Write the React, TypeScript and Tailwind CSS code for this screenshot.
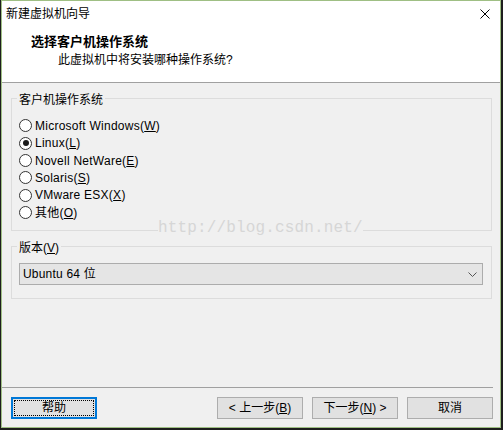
import React from "react";

const font = "font-['Liberation_Sans','Noto_Sans_CJK_SC',sans-serif]";

interface RadioRowProps {
  label: string;
  mnemonic: string;
  checked?: boolean;
}

const RadioRow = ({ label, mnemonic, checked }: RadioRowProps) => {
  return (
    <div className="flex items-center gap-[3px] h-[17.33px]">
      <span className="w-[13px] h-[13px] rounded-full border border-[#333333] bg-white flex items-center justify-center flex-shrink-0">
        {checked && <span className="w-[6px] h-[6px] rounded-full bg-[#1a1a1a]" />}
      </span>
      <span className="text-[12px] leading-[16px] tracking-[0.25px] text-black whitespace-nowrap">
        {label}(<u>{mnemonic}</u>)
      </span>
    </div>
  );
};

const Button = ({ children, focused }: { children: React.ReactNode; focused?: boolean }) => {
  return (
    <div
      className={`w-[86px] h-[22px] bg-[#e1e1e1] flex items-center justify-center text-[12px] leading-[16px] text-black ${
        focused ? "border-2 border-[#0078d7] p-[1px]" : "border border-[#adadad]"
      }`}
    >
      {focused ? (
        <div className="w-full h-full border border-dotted border-black flex items-center justify-center">
          {children}
        </div>
      ) : (
        children
      )}
    </div>
  );
};

const systems = [
  { label: "Microsoft Windows", mnemonic: "W" },
  { label: "Linux", mnemonic: "L", checked: true },
  { label: "Novell NetWare", mnemonic: "E" },
  { label: "Solaris", mnemonic: "S" },
  { label: "VMware ESX", mnemonic: "X" },
  { label: "其他", mnemonic: "O" },
];

export default function App() {
  return (
    <div className={`relative w-[503px] h-[430px] bg-[#1e1e1e] pl-[1px] pr-[2px] pb-[2px] ${font}`}>
      <div className="w-full h-full border border-[#9fbf84] bg-[#f0f0f0] flex flex-col">
        {/* title + header */}
        <div className="bg-white h-[81px] flex flex-col">
          <div className="h-[26px] flex items-center justify-between pl-[4px] pr-[10px]">
            <span className="text-[12px] leading-[16px] text-black">新建虚拟机向导</span>
            <svg width="10" height="10" viewBox="0 0 10 10">
              <path d="M0.5 0.5 L9.5 9.5 M9.5 0.5 L0.5 9.5" stroke="#000" strokeWidth="1" />
            </svg>
          </div>
          <h1 className="mt-[7px] pl-[29px] text-[13px] leading-[16px] font-bold text-black">
            选择客户机操作系统
          </h1>
          <p className="mt-[2px] pl-[56px] text-[12px] leading-[16px] text-black">
            此虚拟机中将安装哪种操作系统?
          </p>
        </div>
        <div className="h-[1px] bg-[#a0a0a0]" />

        {/* body */}
        <div className="flex-1 flex flex-col pl-[9px] pr-[8px]">
          <fieldset className="mt-[5px] h-[143px] border border-[#dcdcdc]">
            <legend className="ml-[5px] px-[2px] pt-[4px] text-[12px] leading-[16px] text-black">
              客户机操作系统
            </legend>
            <div className="flex flex-col pl-[7px] mt-[9.3px]">
              {systems.map((s) => (
                <RadioRow key={s.mnemonic} label={s.label} mnemonic={s.mnemonic} checked={s.checked} />
              ))}
            </div>
          </fieldset>

          <fieldset className="mt-[6px] h-[62px] border border-[#dcdcdc]">
            <legend className="ml-[5px] px-[2px] pt-[3px] text-[12px] leading-[16px] text-black">
              版本(<u>V</u>)
            </legend>
            <div className="mt-[7px] ml-[7px] mr-[8px] h-[22px] border border-[#acacac] bg-[#e5e5e5] flex items-center justify-between pl-[3px] pr-[5px]">
              <span className="text-[12px] leading-[16px] tracking-[0.2px] text-black">Ubuntu 64 位</span>
              <svg width="9" height="5" viewBox="0 0 9 5">
                <path d="M0.5 0.5 L4.5 4.5 L8.5 0.5" stroke="#555" strokeWidth="1" fill="none" />
              </svg>
            </div>
          </fieldset>
        </div>

        {/* footer */}
        <div className="pr-[7px]">
          <div className="h-[1px] bg-[#a0a0a0]" />
        </div>
        <div className="flex justify-between pl-[9px] pr-[7px] mt-[9px] pb-[8px]">
          <Button focused>帮助</Button>
          <div className="flex gap-[9px]">
            <Button>
              &lt; 上一步(<u>B</u>)
            </Button>
            <Button>
              下一步(<u>N</u>) &gt;
            </Button>
            <Button>取消</Button>
          </div>
        </div>
      </div>

      {/* watermark */}
      <div className="absolute left-[158px] top-[218px] bg-[#f0f0f0] text-[16px] leading-[20px] tracking-[0.15px] text-[#d6d6d6] font-['Liberation_Mono',monospace]">
        http://blog.csdn.net/
      </div>
    </div>
  );
}
